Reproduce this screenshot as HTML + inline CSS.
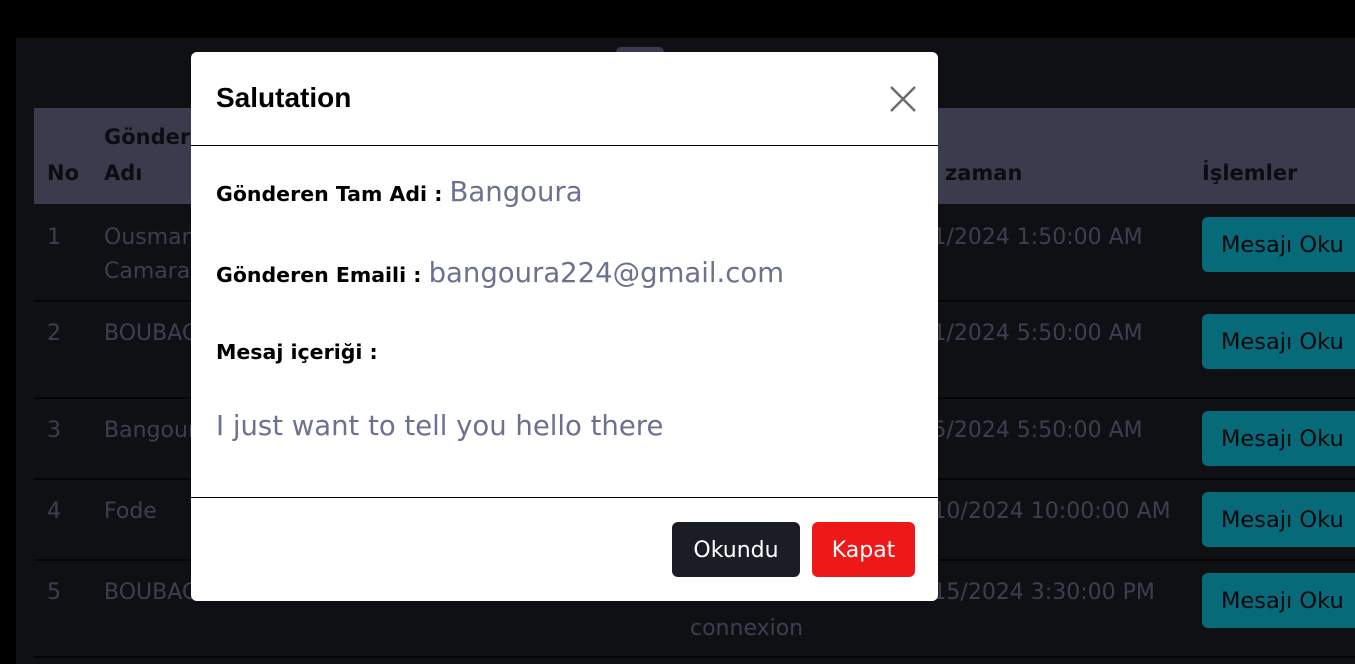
<!DOCTYPE html>
<html><head><meta charset="utf-8"><style>
*{margin:0;padding:0;box-sizing:border-box}
body{width:1355px;height:664px;background:#000;position:relative;overflow:hidden;font-family:"DejaVu Sans","Liberation Sans",sans-serif}
.a{position:absolute;white-space:nowrap}
.panel{left:16px;top:38px;width:1339px;height:626px;background:#0f1014}
.hdr{left:34px;top:108px;width:1321px;height:96px;background:#3a3c4d}
.th{color:#0c0d12;font-size:21px;font-weight:600}
.td{color:#3c3f52;font-size:22px}
.line{left:34px;width:1321px;height:2px;background:#050507}
.btn{left:1202px;width:170px;height:55px;background:#066a79;border-radius:6px;color:#06080c;font-size:22.5px;padding:15px 0 0 19px}
.modal{left:191px;top:52px;width:747px;height:549px;background:#fff;border-radius:6px}
.lab{color:#000;font-size:20.5px;font-weight:600}
.val{color:#6c7191;font-size:27.5px;font-weight:400}
</style></head><body>
<div class="a panel"></div>
<div class="a" style="left:616px;top:47px;width:48px;height:14px;background:#3a3c4d;border-radius:5px"></div>
<div class="a hdr"></div>
<div class="a th" style="left:47px;top:161px">No</div>
<div class="a th" style="left:104px;top:125px">Gönderen</div>
<div class="a th" style="left:104px;top:161px">Adı</div>
<div class="a th" style="left:945px;top:161px">zaman</div>
<div class="a th" style="left:1202px;top:161px">İşlemler</div>

<div class="a td" style="left:47px;top:225px">1</div>
<div class="a td" style="left:104px;top:225px">Ousman</div>
<div class="a td" style="left:104px;top:259px">Camara</div>
<div class="a td" style="left:925px;top:225px">/1/2024 1:50:00 AM</div>
<div class="a btn" style="top:217px">Mesajı Oku</div>
<div class="a line" style="top:300px"></div>

<div class="a td" style="left:47px;top:321px">2</div>
<div class="a td" style="left:104px;top:321px">BOUBACAR</div>
<div class="a td" style="left:925px;top:321px">/1/2024 5:50:00 AM</div>
<div class="a btn" style="top:314px">Mesajı Oku</div>
<div class="a line" style="top:397px"></div>

<div class="a td" style="left:47px;top:418px">3</div>
<div class="a td" style="left:104px;top:418px">Bangoura</div>
<div class="a td" style="left:925px;top:418px">/5/2024 5:50:00 AM</div>
<div class="a btn" style="top:411px">Mesajı Oku</div>
<div class="a line" style="top:478px"></div>

<div class="a td" style="left:47px;top:499px">4</div>
<div class="a td" style="left:104px;top:499px">Fode</div>
<div class="a td" style="left:925px;top:499px">/10/2024 10:00:00 AM</div>
<div class="a btn" style="top:492px">Mesajı Oku</div>
<div class="a line" style="top:559px"></div>

<div class="a td" style="left:47px;top:580px">5</div>
<div class="a td" style="left:104px;top:580px">BOUBACAR</div>
<div class="a td" style="left:690px;top:616px">connexion</div>
<div class="a td" style="left:925px;top:580px">/15/2024 3:30:00 PM</div>
<div class="a btn" style="top:573px">Mesajı Oku</div>
<div class="a line" style="top:656px"></div>

<div class="a modal">
  <div class="a" style="left:25px;top:30px;font-size:28px;font-weight:bold;color:#000;font-family:'Liberation Sans',sans-serif">Salutation</div>
  <svg class="a" style="left:699px;top:34px" width="26" height="26" viewBox="0 0 26 26"><path d="M1 1L25 25M25 1L1 25" stroke="#6b6b6b" stroke-width="2.4" fill="none"/></svg>
  <div class="a" style="left:0;top:93px;width:747px;height:1px;background:#000"></div>
  <div class="a" style="left:25px;top:124px"><span class="lab">Gönderen Tam Adi : </span><span class="val">Bangoura</span></div>
  <div class="a" style="left:25px;top:205px"><span class="lab">Gönderen Emaili : </span><span class="val">bangoura224@gmail.com</span></div>
  <div class="a lab" style="left:25px;top:288px">Mesaj içeriği :</div>
  <div class="a val" style="left:25px;top:358px">I just want to tell you hello there</div>
  <div class="a" style="left:0;top:445px;width:747px;height:1px;background:#000"></div>
  <div class="a" style="left:481px;top:470px;width:128px;height:55px;background:#1a1d26;border-radius:6px;color:#fff;font-size:22px;text-align:center;line-height:57px">Okundu</div>
  <div class="a" style="left:621px;top:470px;width:103px;height:55px;background:#ee1818;border-radius:6px;color:#fff;font-size:22px;text-align:center;line-height:57px">Kapat</div>
</div>
</body></html>
